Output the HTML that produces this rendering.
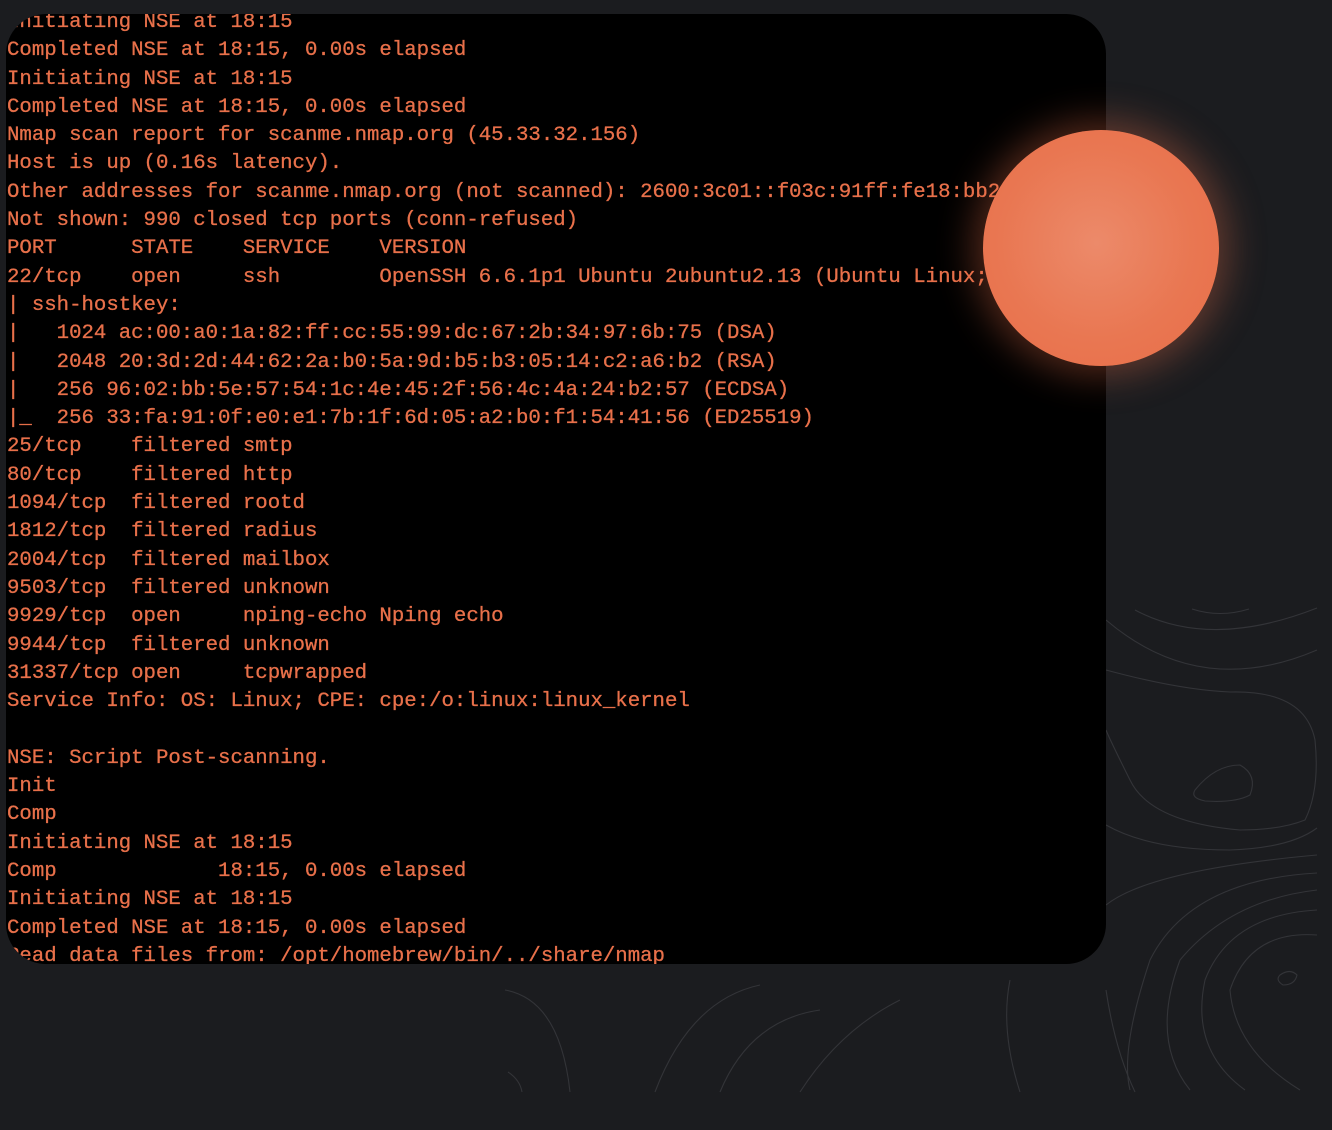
<!DOCTYPE html>
<html><head><meta charset="utf-8"><style>
html,body{margin:0;padding:0}
body{width:1332px;height:1130px;background:#1b1c1f;position:relative;overflow:hidden}
#panel{position:absolute;left:6px;top:14px;width:1100px;height:950px;background:#000;border-radius:40px;overflow:hidden}
#txt{position:absolute;left:1px;top:-5px;margin:0;font-family:"Liberation Mono",monospace;font-size:20.7px;line-height:28.3px;color:#e8704a;white-space:pre;-webkit-text-stroke:0.3px #e8704a}
#sun{position:absolute;left:983px;top:130px;width:236px;height:236px;border-radius:50%;background:radial-gradient(circle at 48% 48%,#ec8a6a 0%,#e97752 55%,#e86d48 100%);box-shadow:0 0 36px 10px rgba(232,112,74,0.35)}
svg{position:absolute;left:0;top:0}
</style></head><body>
<svg width="1332" height="1130" fill="none" stroke="#333438" stroke-width="1.1">
<path d="M1135 610 Q1210 650 1317 608"/>
<path d="M1192 609 Q1220 618 1249 609"/>
<path d="M1106 620 Q1200 700 1317 650"/>
<path d="M1106 670 Q1180 690 1230 692 Q1305 690 1315 740 Q1320 790 1305 820 Q1280 830 1240 830 Q1150 822 1130 780 Q1110 740 1106 730"/>
<path d="M1195 790 Q1215 765 1240 765 Q1258 775 1250 795 Q1235 803 1205 801 Q1190 798 1195 790Z"/>
<path d="M1106 825 Q1150 850 1230 850 Q1290 848 1317 828"/>
<path d="M1106 905 Q1150 870 1317 855"/>
<path d="M1130 1090 Q1120 1050 1150 960 Q1190 880 1317 873"/>
<path d="M1190 1090 Q1150 1040 1180 960 Q1230 900 1317 890"/>
<path d="M1245 1090 Q1190 1050 1205 980 Q1230 915 1317 910"/>
<path d="M1300 1090 Q1235 1050 1230 990 Q1250 930 1317 935"/>
<path d="M1280 975 Q1290 968 1297 975 Q1295 985 1283 985 Q1275 980 1280 975Z"/>
<path d="M1106 990 Q1115 1050 1135 1092"/>
<path d="M505 990 Q560 1000 570 1092"/>
<path d="M655 1092 Q690 1000 760 985"/>
<path d="M720 1092 Q750 1020 820 1010"/>
<path d="M800 1092 Q840 1030 900 1000"/>
<path d="M1020 1092 Q1000 1030 1010 980"/>
<path d="M508 1072 Q520 1080 522 1092"/>
</svg>
<div id="panel"><pre id="txt">Initiating NSE at 18:15
Completed NSE at 18:15, 0.00s elapsed
Initiating NSE at 18:15
Completed NSE at 18:15, 0.00s elapsed
Nmap scan report for scanme.nmap.org (45.33.32.156)
Host is up (0.16s latency).
Other addresses for scanme.nmap.org (not scanned): 2600:3c01::f03c:91ff:fe18:bb24
Not shown: 990 closed tcp ports (conn-refused)
PORT      STATE    SERVICE    VERSION
22/tcp    open     ssh        OpenSSH 6.6.1p1 Ubuntu 2ubuntu2.13 (Ubuntu Linux; protocol 2.0)
| ssh-hostkey:
|   1024 ac:00:a0:1a:82:ff:cc:55:99:dc:67:2b:34:97:6b:75 (DSA)
|   2048 20:3d:2d:44:62:2a:b0:5a:9d:b5:b3:05:14:c2:a6:b2 (RSA)
|   256 96:02:bb:5e:57:54:1c:4e:45:2f:56:4c:4a:24:b2:57 (ECDSA)
|_  256 33:fa:91:0f:e0:e1:7b:1f:6d:05:a2:b0:f1:54:41:56 (ED25519)
25/tcp    filtered smtp
80/tcp    filtered http
1094/tcp  filtered rootd
1812/tcp  filtered radius
2004/tcp  filtered mailbox
9503/tcp  filtered unknown
9929/tcp  open     nping-echo Nping echo
9944/tcp  filtered unknown
31337/tcp open     tcpwrapped
Service Info: OS: Linux; CPE: cpe:/o:linux:linux_kernel

NSE: Script Post-scanning.
Init
Comp
Initiating NSE at 18:15
Comp             18:15, 0.00s elapsed
Initiating NSE at 18:15
Completed NSE at 18:15, 0.00s elapsed
Read data files from: /opt/homebrew/bin/../share/nmap</pre></div>
<div id="sun"></div>
</body></html>
